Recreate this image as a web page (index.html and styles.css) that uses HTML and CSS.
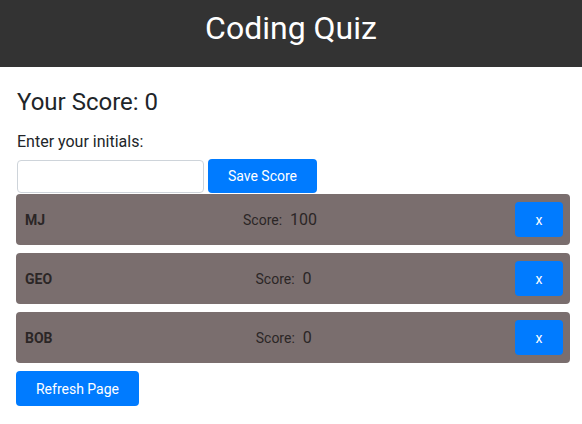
FILE: index.html
```html
<!DOCTYPE html>
<html>
<head>
<meta charset="utf-8">
<link rel="stylesheet" href="styles.css">
</head>
<body>
<header class="top">Coding Quiz</header>
<main class="content">
  <h2 class="your-score">Your Score: 0</h2>
  <label class="label" for="initials">Enter your initials:</label>
  <div class="form">
    <input id="initials" class="input" type="text">
    <button class="btn btn-save">Save Score</button>
  </div>
  <ul class="list">
    <li class="row"><span class="name">MJ</span><span class="score"><span class="score-label">Score:</span><span class="score-val">100</span></span><button class="btn btn-x">x</button></li>
    <li class="row"><span class="name">GEO</span><span class="score"><span class="score-label">Score:</span><span class="score-val">0</span></span><button class="btn btn-x">x</button></li>
    <li class="row"><span class="name">BOB</span><span class="score"><span class="score-label">Score:</span><span class="score-val">0</span></span><button class="btn btn-x">x</button></li>
  </ul>
  <button class="btn btn-refresh">Refresh Page</button>
</main>
</body>
</html>
```
FILE: styles.css
```css
* { box-sizing: border-box; }
body {
  margin: 0;
  font-family: Roboto, "Liberation Sans", sans-serif;
  color: #212529;
  background: #fff;
}
.top {
  height: 67px;
  background: #333333;
  color: #fff;
  font-size: 32px;
  text-align: center;
  line-height: 56px;
}
.content {
  padding: 0 12px 0 16px;
}
.your-score {
  margin: 21px 0 0 1px;
  font-size: 24px;
  font-weight: 400;
  line-height: 29px;
}
.label {
  display: block;
  margin: 15px 0 0 1px;
  font-size: 16px;
  line-height: 19px;
}
.form {
  display: flex;
  align-items: center;
  gap: 4px;
  margin-top: 8px;
  margin-left: 1px;
}
.input {
  width: 187px;
  height: 33px;
  border: 1px solid #ced4da;
  border-radius: 4px;
  margin-top: 1px;
}
.btn {
  border: none;
  background: #007bff;
  color: #fff;
  font-family: Roboto, "Liberation Sans", sans-serif;
  border-radius: 4px;
  padding: 0;
}
.btn-save {
  width: 109px;
  height: 34px;
  font-size: 14px;
}
.list {
  list-style: none;
  margin: 1px 0 0;
  padding: 0;
  display: flex;
  flex-direction: column;
  gap: 8px;
}
.row {
  display: flex;
  justify-content: space-between;
  align-items: center;
  height: 51px;
  padding: 0 7px 0 9px;
  background: #7a6e6e;
  border-radius: 4px;
}
.name {
  font-weight: 700;
  font-size: 14px;
  color: #2b2626;
}
.score {
  display: flex;
  align-items: baseline;
  gap: 8px;
  color: #2b2626;
}
.score-label { font-size: 14px; }
.score-val { font-size: 16px; }
.btn-x {
  width: 48px;
  height: 35px;
  font-size: 14px;
}
.btn-refresh {
  margin-top: 8px;
  width: 123px;
  height: 35px;
  font-size: 14px;
}
```
